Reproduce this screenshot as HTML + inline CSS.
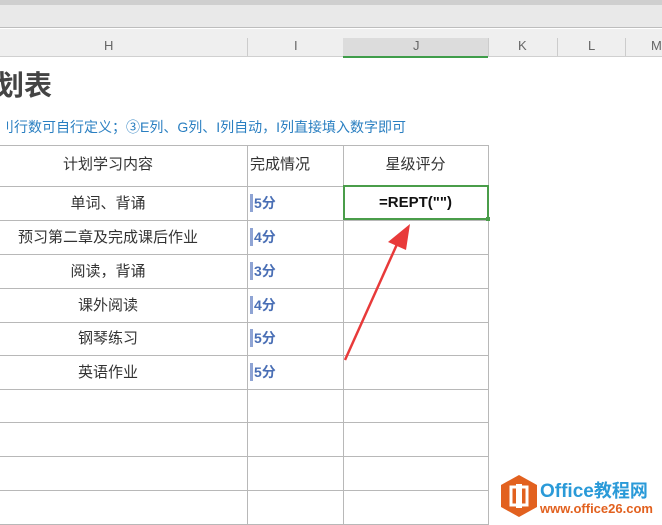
<!DOCTYPE html><html><head><meta charset="utf-8"><style>
*{margin:0;padding:0;box-sizing:border-box}
body{width:662px;height:525px;overflow:hidden;background:#fff;position:relative;font-family:"Liberation Sans","Noto Sans CJK SC",sans-serif}
.a{position:absolute;white-space:nowrap}
.hl{position:absolute;left:0;width:488px;height:1px;background:#b8b8b8}
.vl{position:absolute;top:145px;height:380px;width:1px;background:#b8b8b8}
.t{position:absolute;font-size:15px;color:#333;text-align:center;line-height:20px}
.s{position:absolute;left:250px;font-size:14px;font-weight:bold;color:#4a6fb5;border-left:3px solid #8fa4d4;padding-left:1px;line-height:18px}
.ch{position:absolute;top:38px;font-size:13px;color:#666}
</style></head><body>
<div class="a" style="left:0;top:0;width:662px;height:5px;background:#cfcfcf"></div>
<div class="a" style="left:0;top:5px;width:662px;height:23px;background:#e9e9e9;border-bottom:1px solid #bdbdbd"></div>
<div class="a" style="left:0;top:29px;width:662px;height:28px;background:#efefef;border-bottom:1px solid #d0d0d0"></div>
<div class="a" style="left:343px;top:38px;width:145px;height:20px;background:#dcdcdc;border-bottom:2px solid #3f9d4a"></div>
<div class="a" style="left:247px;top:38px;width:1px;height:18px;background:#ccc"></div>
<div class="a" style="left:488px;top:38px;width:1px;height:18px;background:#ccc"></div>
<div class="a" style="left:557px;top:38px;width:1px;height:18px;background:#ccc"></div>
<div class="a" style="left:625px;top:38px;width:1px;height:18px;background:#ccc"></div>
<div class="ch" style="left:104px">H</div>
<div class="ch" style="left:294px">I</div>
<div class="ch" style="left:413px">J</div>
<div class="ch" style="left:518px">K</div>
<div class="ch" style="left:588px">L</div>
<div class="ch" style="left:651px">M</div>
<div class="a" style="left:-4px;top:64px;font-size:28px;font-weight:bold;color:#444">划表</div>
<div class="a" style="left:0;top:117px;font-size:14px;color:#2a7fc1">刂行数可自行定义；③E列、G列、I列自动，I列直接填入数字即可</div>
<div class="hl" style="top:145px"></div><div class="hl" style="top:186px"></div><div class="hl" style="top:220px"></div><div class="hl" style="top:254px"></div><div class="hl" style="top:288px"></div><div class="hl" style="top:322px"></div><div class="hl" style="top:355px"></div><div class="hl" style="top:389px"></div><div class="hl" style="top:422px"></div><div class="hl" style="top:456px"></div><div class="hl" style="top:490px"></div><div class="hl" style="top:524px"></div>
<div class="vl" style="left:247px"></div><div class="vl" style="left:343px"></div><div class="vl" style="left:488px"></div>
<div class="t" style="left:0;width:216px;top:155px">计划学习内容</div>
<div class="t" style="left:248px;width:64px;top:155px">完成情况</div>
<div class="t" style="left:343px;width:145px;top:155px">星级评分</div>
<div class="t" style="left:0;width:216px;top:194px">单词、背诵</div>
<div class="t" style="left:0;width:216px;top:228px">预习第二章及完成课后作业</div>
<div class="t" style="left:0;width:216px;top:262px">阅读，背诵</div>
<div class="t" style="left:0;width:216px;top:296px">课外阅读</div>
<div class="t" style="left:0;width:216px;top:329px">钢琴练习</div>
<div class="t" style="left:0;width:216px;top:363px">英语作业</div>
<div class="s" style="top:194px">5分</div><div class="s" style="top:228px">4分</div><div class="s" style="top:262px">3分</div><div class="s" style="top:296px">4分</div><div class="s" style="top:329px">5分</div><div class="s" style="top:363px">5分</div>
<div class="a" style="left:343px;top:185px;width:146px;height:35px;border:2px solid #4a9d4a"></div>
<div class="a" style="left:486px;top:217px;width:4px;height:4px;background:#4a9d4a"></div>
<div class="t" style="left:343px;width:145px;top:193px;font-weight:bold;color:#111;font-size:15px">=REPT("")</div>
<svg class="a" style="left:340px;top:220px" width="80" height="145"><path d="M5 140 L58 22" stroke="#e83a3a" stroke-width="2.5"/><polygon points="70,4 48,22 66,30" fill="#e83a3a"/></svg>
<svg class="a" style="left:499px;top:474px" width="40" height="44"><polygon points="20,1 38,11 38,33 20,43 2,33 2,11" fill="#e2611f"/><rect x="12" y="13" width="16" height="18" fill="none" stroke="#fff" stroke-width="3"/><rect x="17" y="10" width="6" height="24" fill="#fff"/></svg>
<div class="a" style="left:540px;top:479px;font-size:19px;font-weight:bold;color:#2a9ad8;line-height:22px">Office<span style="font-family:'Noto Sans CJK SC',sans-serif;font-size:18px">教程网</span></div>
<div class="a" style="left:540px;top:501px;font-size:13px;font-weight:bold;color:#e2611f;line-height:16px">www.office26.com</div>
</body></html>
